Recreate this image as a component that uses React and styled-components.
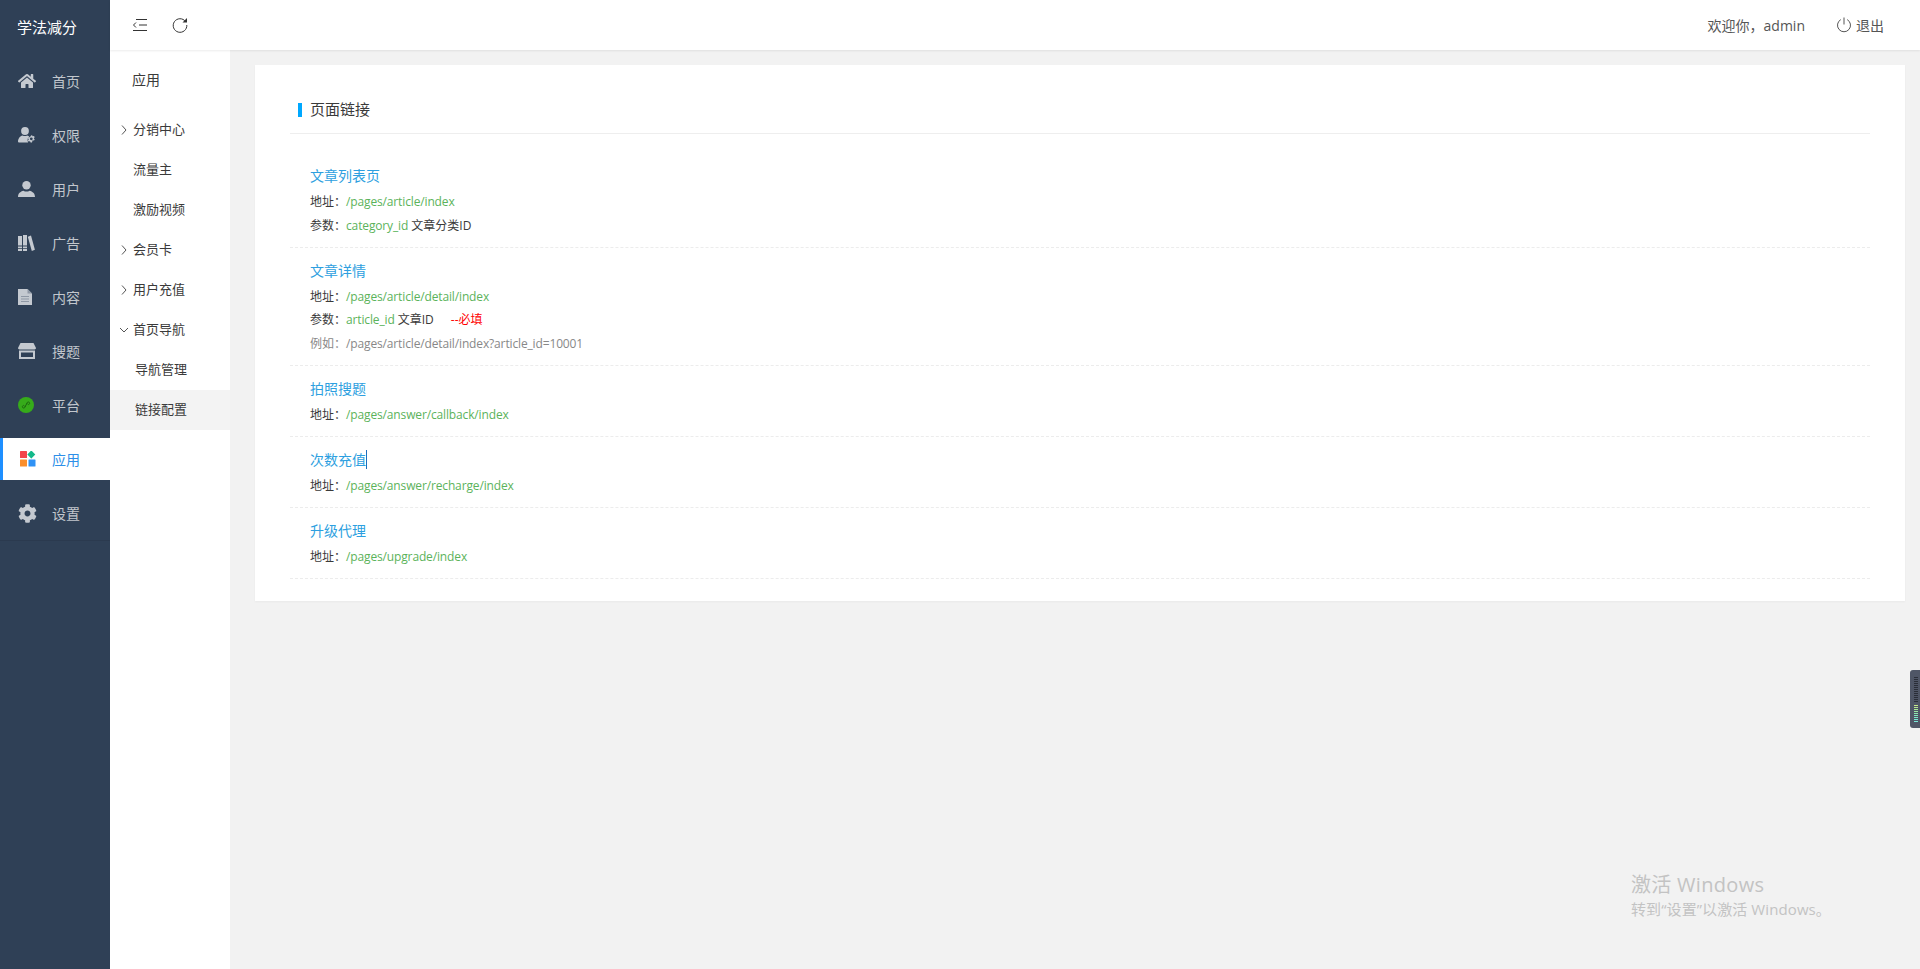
import React from 'react';
import styled, {createGlobalStyle} from 'styled-components';
import {FaHome, FaCog} from 'react-icons/fa';

const GlobalStyle = createGlobalStyle`
  html, body {
    margin: 0;
    padding: 0;
    background: #f2f2f2;
  }
  body {
    font-family: "Open Sans", "Noto Sans CJK SC", sans-serif;
    color: #333;
    overflow: hidden;
  }
`

const PageSC = styled('div')`
  display: flex;
  width: 1920px;
  height: 969px;
  position: relative;
  overflow: hidden;
`

const SidebarSC = styled('div')`
  width: 110px;
  flex: none;
  background: #2f4056;
`

const BrandSC = styled('div')`
  height: 50px;
  padding-left: 17px;
  line-height: 54px;
  font-size: 15px;
  color: #fff;
`

const NavSC = styled('div')`
  display: flex;
  flex-direction: column;
  gap: 12px;
  padding: 10px 0 6px;
  border-bottom: 1px solid #2b3a4f;
`

const NavItemSC = styled('div')`
  height: 42px;
  display: flex;
  align-items: center;
  padding-left: ${p => p.$active ? '15px' : '18px'};
  background: ${p => p.$active ? '#fff' : 'transparent'};
  border-left: ${p => p.$active ? '3px solid #1e8fff' : 'none'};
  color: ${p => p.$active ? '#2d8fe8' : '#c2c7cd'};
  font-size: 14px;
`

const NavIconSC = styled('span')`
  width: 34px;
  flex: none;
  box-sizing: border-box;
  padding-left: ${p => p.$active ? '2px' : '0'};
  display: flex;
  align-items: center;
  color: #c4c9d0;
  font-size: 18px;
`

const MainSC = styled('div')`
  flex: 1;
  min-width: 0;
  display: flex;
  flex-direction: column;
`

const HeaderSC = styled('div')`
  height: 50px;
  flex: none;
  display: flex;
  align-items: center;
  padding: 0 36px 0 22px;
  background: #fff;
  box-shadow: 0 1px 2px rgba(0, 0, 0, 0.08);
  position: relative;
  color: #444;
`

const HeaderToolSC = styled('span')`
  display: flex;
  align-items: center;
  margin-right: 24px;
`

const WelcomeSC = styled('span')`
  margin-left: auto;
  font-size: 14px;
  color: #555;
`

const LogoutSC = styled('span')`
  display: flex;
  align-items: center;
  gap: 4px;
  margin-left: 31px;
  font-size: 14px;
  color: #555;
`

const BodySC = styled('div')`
  flex: 1;
  display: flex;
  min-height: 0;
`

const SubMenuSC = styled('div')`
  width: 120px;
  flex: none;
  background: #fff;
`

const SubTitleSC = styled('div')`
  height: 60px;
  padding-left: 22px;
  line-height: 60px;
  font-size: 14px;
  color: #3a3a3a;
`

const SubItemSC = styled('div')`
  height: 40px;
  box-sizing: border-box;
  padding-bottom: 3px;
  display: flex;
  align-items: center;
  padding-left: ${p => p.$child ? '25px' : '23px'};
  background: ${p => p.$selected ? '#f3f3f3' : 'transparent'};
  font-size: 13px;
  color: #3a3a3a;
  position: relative;
`

const ArrowSC = styled('svg')`
  position: absolute;
  left: 9px;
  top: 15px;
`

const ContentSC = styled('div')`
  flex: 1;
  min-width: 0;
  padding: 15px 15px 0 25px;
`

const CardSC = styled('div')`
  background: #fff;
  padding: 0 35px 22px;
  box-shadow: 0 1px 2px rgba(0, 0, 0, 0.04);
`

const CardTitleSC = styled('div')`
  padding: 32px 0 12px 20px;
  line-height: 24px;
  font-size: 15px;
  color: #3a3a3a;
  border-bottom: 1px solid #eee;
  position: relative;

  &::before {
    content: '';
    position: absolute;
    left: 8px;
    top: 38px;
    width: 4px;
    height: 14px;
    background: #00a8ff;
  }
`

const LinkListSC = styled('div')`
  margin-top: 19px;
`

const LinkRowSC = styled('div')`
  padding: 9px 0 9.500px 20px;
  border-bottom: 1px dashed #ececec;
`

const LinkNameSC = styled('div')`
  height: 28px;
  line-height: 28px;
  font-size: 14px;
  color: #2d9fe0;
  display: flex;
  align-items: center;
`

const CaretSC = styled('span')`
  width: 1px;
  height: 19px;
  background: #1a6fc0;
`

const LineSC = styled('div')`
  height: 23.500px;
  line-height: 23.500px;
  font-size: 12px;
  color: ${p => p.$muted ? '#888' : '#3a3a3a'};
`

const PathSC = styled('span')`
  color: ${p => p.$muted ? '#888' : '#5bb35b'};
  letter-spacing: -0.14px;
`

const RequiredSC = styled('span')`
  margin-left: 17px;
  color: #f00;
`

const WatermarkSC = styled('div')`
  position: absolute;
  left: 1631px;
  top: 871px;
  color: #c3c3c3;
`

const WatermarkMainSC = styled('div')`
  font-size: 20px;
  line-height: 28px;
  letter-spacing: 0.3px;
`

const WatermarkSubSC = styled('div')`
  font-size: 15px;
  line-height: 20px;
  letter-spacing: 0.1px;
`

const MeterSC = styled('div')`
  position: absolute;
  right: 0;
  top: 670px;
  width: 10px;
  height: 58px;
  box-sizing: border-box;
  padding: 7px 0 0 4px;
  background: #4f5666;
  border-radius: 3px 0 0 3px;
  display: flex;
  flex-direction: column;
  gap: 1px;
`

const MeterBarSC = styled('span')`
  display: block;
  width: 4px;
  height: 1px;
  background: ${p => p.$color};
`

const GrantIcon = () => (
    <svg width="18" height="16" viewBox="0 0 18 16" fill="currentColor">
        <circle cx="7" cy="4" r="3.900"/>
        <path d="M0 14.800c0-3.500 2.200-5.800 4.500-6.300 1.500.7 3.200.7 4.700 0 .8.200 1.500.6 2.100 1.100-1.500 1-2.300 3.200-1.200 5.800H1c-.6 0-1-.2-1-.6z"/>
        <path fillRule="evenodd" d="M14 8l.6 1.300 1.400-.3.700 1.200-.9 1.100.9 1.100-.7 1.200-1.400-.3L14 15.600h-1.400l-.6-1.300-1.400.3-.7-1.200.9-1.100-.9-1.100.7-1.200 1.400.3.600-1.300zM13.300 10.400a1.400 1.400 0 1 0 0 2.800 1.400 1.400 0 0 0 0-2.800z"/>
    </svg>
)

const UserIcon = () => (
    <svg width="17" height="16" viewBox="0 0 17 16" fill="currentColor">
        <circle cx="8.500" cy="4.200" r="4.200"/>
        <path d="M0 16c0-3.800 2.400-5.400 5.500-6.300 1.800 1.200 4.200 1.200 6 0 3.100.9 5.500 2.500 5.500 6.300z"/>
    </svg>
)

const BooksIcon = () => (
    <svg width="17" height="16" viewBox="0 0 17 16" fill="currentColor">
        <path d="M0 1h4v15H0zM5 0h4v16H5zM9.800 1.800L13 .6l3.900 14.200-3.100 1.200z"/>
        <path d="M0 10.500h9v1H0zM0 13h9v.800H0z" fill="#2f4056"/>
    </svg>
)

const FileIcon = () => (
    <svg width="14" height="16" viewBox="0 0 14 16">
        <path d="M0 0h9.500L14 4.500V16H0z" fill="#c4c9d0"/>
        <path d="M9.500 0v4.500H14z" fill="#8f98a5"/>
        <path d="M3 7.500h8M3 10h8M3 12.500h8" stroke="#8f98a5" strokeWidth="1"/>
    </svg>
)

const StoreIcon = () => (
    <svg width="18" height="16" viewBox="0 0 18 16" fill="currentColor">
        <path d="M2.500 0h13L18 5c0 .9-.7 1.400-1.500 1.400h-15C.7 6.400 0 5.900 0 5z"/>
        <path fillRule="evenodd" d="M1 7.500h16V16H1zM3 9.500v4.500h12V9.500z"/>
    </svg>
)

const MiniIcon = () => (
    <svg width="16" height="16" viewBox="0 0 16 16">
        <circle cx="8" cy="8" r="8" fill="#36ab1a"/>
        <path d="M7.200 8.400L7 10c-.2 1.500-2.500 1.400-2.600-.1-.1-1 .7-1.500 1.500-1.500M8.800 7.600L9 6c.2-1.500 2.500-1.400 2.600.1.100 1-.7 1.500-1.500 1.500M7 10l2-4" fill="none" stroke="#1d6b10" strokeWidth="1"/>
    </svg>
)

const AppsIcon = () => (
    <svg width="16" height="16" viewBox="0 0 16 16">
        <rect x="0" y="0" width="7" height="7" rx="0.500" fill="#f4454b"/>
        <rect x="8.400" y="0.600" width="5.800" height="5.800" rx="0.500" fill="#13b98a" transform="rotate(45 11.300 3.500)"/>
        <rect x="0" y="8.500" width="7" height="7" rx="0.500" fill="#fb8f2d"/>
        <rect x="8.500" y="8.500" width="7" height="7" rx="0.500" fill="#2f92f5"/>
    </svg>
)

const navList = [
    {name: '首页', icon: <FaHome/>},
    {name: '权限', icon: <GrantIcon/>},
    {name: '用户', icon: <UserIcon/>},
    {name: '广告', icon: <BooksIcon/>},
    {name: '内容', icon: <FileIcon/>},
    {name: '搜题', icon: <StoreIcon/>},
    {name: '平台', icon: <MiniIcon/>},
    {name: '应用', icon: <AppsIcon/>, active: true},
    {name: '设置', icon: <FaCog size={19}/>},
]

const subList = [
    {name: '分销中心', arrow: 'right'},
    {name: '流量主'},
    {name: '激励视频'},
    {name: '会员卡', arrow: 'right'},
    {name: '用户充值', arrow: 'right'},
    {name: '首页导航', arrow: 'down'},
    {name: '导航管理', child: true},
    {name: '链接配置', child: true, selected: true},
]

const meterColors = [
    ...Array(13).fill('#2a2e38'),
    'transparent',
    '#c6e88a', '#b8e88f', '#a8e896', '#98e8a2', '#8ce8b0', '#82e8bc', '#7ce8c8', '#78e8d0', '#78e8d8',
]

const Arrow = ({type}) => (
    <ArrowSC width="10" height="10" viewBox="0 0 10 10" fill="none" stroke="#555" strokeWidth="1">
        <path d={type === 'down' ? 'M1 3l4 4 4-4' : 'M3 .500L7 5l-4 4.500'}/>
    </ArrowSC>
)

const App = () => {
    return (
        <PageSC>
            <GlobalStyle/>
            <SidebarSC>
                <BrandSC>学法减分</BrandSC>
                <NavSC>
                    {navList.map(item => (
                        <NavItemSC key={item.name} $active={item.active}>
                            <NavIconSC $active={item.active}>{item.icon}</NavIconSC>
                            {item.name}
                        </NavItemSC>
                    ))}
                </NavSC>
            </SidebarSC>
            <MainSC>
                <HeaderSC>
                    <HeaderToolSC>
                        <svg width="16" height="14" viewBox="0 0 16 14" fill="none" stroke="#333" strokeWidth="1">
                            <path d="M4 1.500h11M7 7h8M1 12.500h14M4 4.500L1.500 7 4 9.500"/>
                        </svg>
                    </HeaderToolSC>
                    <HeaderToolSC>
                        <svg width="16" height="16" viewBox="0 0 16 16" fill="none" stroke="#333" strokeWidth="1">
                            <path d="M13.500 4.500A6.800 6.800 0 1 0 14.800 8"/>
                            <path d="M15 1v4.500h-4.500z" fill="#333" stroke="none"/>
                        </svg>
                    </HeaderToolSC>
                    <WelcomeSC>欢迎你，admin</WelcomeSC>
                    <LogoutSC>
                        <svg width="16" height="16" viewBox="0 0 16 16" fill="none" stroke="#555" strokeWidth="1">
                            <path d="M4.800 2.600a6.500 6.500 0 1 0 6.400 0M8 .5v7"/>
                        </svg>
                        退出
                    </LogoutSC>
                </HeaderSC>
                <BodySC>
                    <SubMenuSC>
                        <SubTitleSC>应用</SubTitleSC>
                        {subList.map(item => (
                            <SubItemSC key={item.name} $child={item.child} $selected={item.selected}>
                                {item.arrow && <Arrow type={item.arrow}/>}
                                {item.name}
                            </SubItemSC>
                        ))}
                    </SubMenuSC>
                    <ContentSC>
                        <CardSC>
                            <CardTitleSC>页面链接</CardTitleSC>
                            <LinkListSC>
                                <LinkRowSC>
                                    <LinkNameSC>文章列表页</LinkNameSC>
                                    <LineSC>地址：<PathSC>/pages/article/index</PathSC></LineSC>
                                    <LineSC>参数：<PathSC>category_id</PathSC> 文章分类ID</LineSC>
                                </LinkRowSC>
                                <LinkRowSC>
                                    <LinkNameSC>文章详情</LinkNameSC>
                                    <LineSC>地址：<PathSC>/pages/article/detail/index</PathSC></LineSC>
                                    <LineSC>参数：<PathSC>article_id</PathSC> 文章ID<RequiredSC>--必填</RequiredSC></LineSC>
                                    <LineSC $muted>例如：<PathSC $muted>/pages/article/detail/index?article_id=10001</PathSC></LineSC>
                                </LinkRowSC>
                                <LinkRowSC>
                                    <LinkNameSC>拍照搜题</LinkNameSC>
                                    <LineSC>地址：<PathSC>/pages/answer/callback/index</PathSC></LineSC>
                                </LinkRowSC>
                                <LinkRowSC>
                                    <LinkNameSC>次数充值<CaretSC/></LinkNameSC>
                                    <LineSC>地址：<PathSC>/pages/answer/recharge/index</PathSC></LineSC>
                                </LinkRowSC>
                                <LinkRowSC>
                                    <LinkNameSC>升级代理</LinkNameSC>
                                    <LineSC>地址：<PathSC>/pages/upgrade/index</PathSC></LineSC>
                                </LinkRowSC>
                            </LinkListSC>
                        </CardSC>
                    </ContentSC>
                </BodySC>
            </MainSC>
            <MeterSC>
                {meterColors.map((color, index) => <MeterBarSC key={index} $color={color}/>)}
            </MeterSC>
            <WatermarkSC>
                <WatermarkMainSC>激活 Windows</WatermarkMainSC>
                <WatermarkSubSC>转到“设置”以激活 Windows。</WatermarkSubSC>
            </WatermarkSC>
        </PageSC>
    );
}

export default App;
